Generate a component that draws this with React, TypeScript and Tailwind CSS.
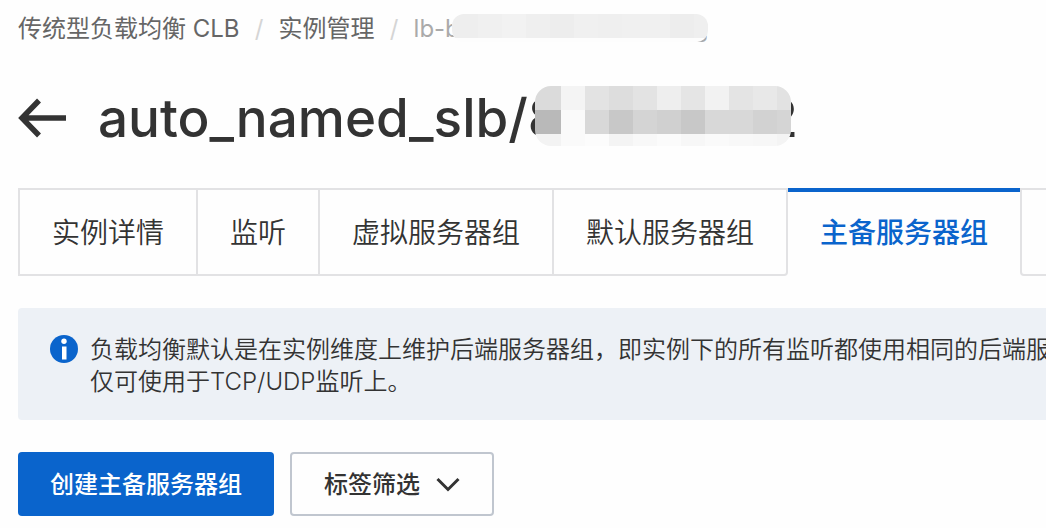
const TABS = ["实例详情", "监听", "虚拟服务器组", "默认服务器组", "主备服务器组", "监控"];
const ACTIVE = 4;

const TOP_ROW = ["#dbdbdb", "#f4f4f4", "#e3e3e3", "#dddddd", "#e3e3e3", "#eeeeee", "#e5e5e5", "#f2f2f2", "#e4e4e4", "#e8e8e8", "#e2e2e2"];
const MID_ROW = ["#b9b9b9", "#fafafa", "#d8d8d8", "#c8c8c8", "#d4d4d4", "#d0d0d0", "#c8c8c8", "#d8d8d8", "#d8d8d8", "#d2d2d2", "#d5d5d5"];
const LOW_ROW = ["#f3f3f3", "#fafafa", "#fcfcfc", "#f4f4f4", "#f8f8f8", "#fbfbfb", "#f7f7f7", "#fafafa", "#f8f8f8", "#f7f7f7", "#f4f4f4"];
const ID_ROW = ["#eeeeee", "#f0f0f0", "#f2f2f2", "#efefef", "#ededed", "#f0f0f0", "#efefef", "#f0f0f0", "#f0f0f0", "#ededed", "#efefef"];

function MaskRow({ colors, height }: { colors: string[]; height: string }) {
  return (
    <span className={`flex ${height}`}>
      {colors.map((c, i) => (
        <span key={i} className={i === 0 ? "w-[26px]" : i === colors.length - 1 ? "w-[14px]" : "w-6"} style={{ backgroundColor: c }} />
      ))}
    </span>
  );
}

function Breadcrumb() {
  return (
    <nav aria-label="breadcrumb" className="flex h-14 items-center overflow-hidden whitespace-nowrap pt-0.5 text-2xl text-[#666]">
      <a href="#clb">传统型负载均衡 CLB</a>
      <span className="w-[39px] text-center text-[#d5d5d5]">/</span>
      <a href="#instances">实例管理</a>
      <span className="w-[39px] text-center text-[#d5d5d5]">/</span>
      <span className="flex items-center text-[#aaa]">
        lb-b
        <span className="relative z-10 -ml-2 mb-0.5 flex w-64 flex-col overflow-hidden rounded-xl bg-[#fdfdfd]">
          <MaskRow colors={ID_ROW} height="h-6" />
          <span className="h-1" />
        </span>
        <span className="-ml-3.5">g</span>
      </span>
    </nav>
  );
}

function Title() {
  return (
    <header className="flex h-[124px] items-center whitespace-nowrap text-[#333]">
      <a href="#back" aria-label="返回" className="mr-8">
        <svg width="48" height="40" viewBox="0 0 48 40" fill="none" stroke="currentColor" strokeWidth="5.5">
          <path d="M21 2.500 4 20l17 17.500M4 20h44" />
        </svg>
      </a>
      <h1 className="flex items-center text-[53px] font-medium leading-[64px]">
        auto_named_slb/8
        <span className="relative z-10 -ml-[26px] mb-1 flex w-64 flex-col overflow-hidden rounded-2xl">
          <MaskRow colors={TOP_ROW} height="h-6" />
          <MaskRow colors={MID_ROW} height="h-6" />
          <MaskRow colors={LOW_ROW} height="h-3" />
        </span>
        <span className="-ml-[26px]">2</span>
      </h1>
    </header>
  );
}

export default function App() {
  return (
    <main className="min-h-screen overflow-hidden bg-[#fefefe] pl-[18px] font-['Inter','Noto_Sans_CJK_SC',sans-serif] text-[#333]">
      <Breadcrumb />
      <Title />
      <div role="tablist" className="mt-2 flex overflow-hidden whitespace-nowrap">
        {TABS.map((label, i) => (
          <button
            key={label}
            role="tab"
            type="button"
            aria-selected={i === ACTIVE}
            className={
              i === ACTIVE
                ? "h-[88px] shrink-0 border-t-4 border-[#0a64cc] px-8 pb-0.5 text-[28px] font-medium text-[#0a64cc]"
                : i === ACTIVE - 1
                  ? "h-[88px] shrink-0 rounded-br border-2 border-l-0 border-[#e2e2e4] px-8 pt-0.5 text-[28px] font-[350]"
                  : i === 0
                    ? "h-[88px] shrink-0 border-2 border-[#e2e2e4] px-8 pt-0.5 text-[28px] font-[350]"
                    : i > ACTIVE
                      ? "h-[88px] shrink-0 rounded-bl border-2 border-[#e2e2e4] px-8 pt-0.5 text-[28px] font-[350]"
                      : "h-[88px] shrink-0 border-2 border-l-0 border-[#e2e2e4] px-8 pt-0.5 text-[28px] font-[350]"
            }
          >
            {label}
          </button>
        ))}
      </div>
      <section className="mt-8 flex gap-3 overflow-hidden rounded-l bg-[#edf1f6] pt-[26px] pb-[22px] pl-8">
        <svg className="mt-px shrink-0" width="28" height="28" viewBox="0 0 28 28">
          <circle cx="14" cy="14" r="14" fill="#0a64cc" />
          <circle cx="14" cy="6.3" r="2.7" fill="#fff" />
          <path d="M12 11.500h4.500V24.500H12z" fill="#fff" />
        </svg>
        <p className="whitespace-nowrap text-2xl font-[350]">
          负载均衡默认是在实例维度上维护后端服务器组，即实例下的所有监听都使用相同的后端服务器组。
          <br />
          仅可使用于TCP/UDP监听上。
        </p>
      </section>
      <div className="mt-8 flex gap-4">
        <button type="button" className="h-16 rounded bg-[#0a64cc] px-8 pt-0.5 text-2xl font-medium text-white">
          创建主备服务器组
        </button>
        <button type="button" className="flex h-16 items-center gap-4 rounded border-2 border-[#c0c6cf] px-8 pt-0.5 text-2xl font-medium">
          标签筛选
          <svg width="24" height="16" viewBox="0 0 24 16" fill="none" stroke="currentColor" strokeWidth="3">
            <path d="m1.500 2 10.500 10.500L22.500 2" />
          </svg>
        </button>
      </div>
    </main>
  );
}
